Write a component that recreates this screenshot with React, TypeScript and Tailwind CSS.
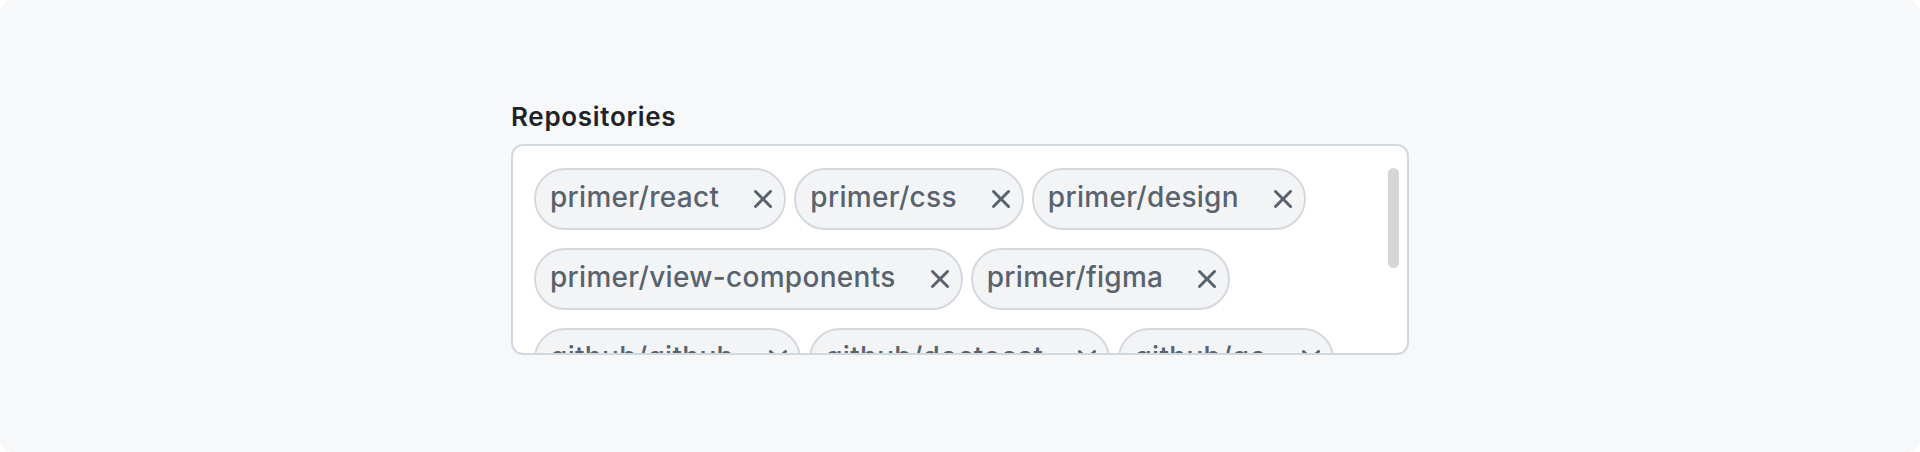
import React from "react";

const tokens = [
  "primer/react",
  "primer/css",
  "primer/design",
  "primer/view-components",
  "primer/figma",
  "github/github",
  "github/doctocat",
  "github/go",
  "github/docs",
  "github/primer",
];

function XIcon() {
  return (
    <svg width="32" height="32" viewBox="0 0 16 16" fill="currentColor" className="shrink-0">
      <path d="M3.72 3.72a.75.75 0 0 1 1.06 0L8 6.94l3.22-3.22a.749.749 0 0 1 1.275.326.749.749 0 0 1-.215.734L9.06 8l3.22 3.22a.749.749 0 0 1-.326 1.275.749.749 0 0 1-.734-.215L8 9.06l-3.22 3.22a.751.751 0 0 1-1.042-.018.751.751 0 0 1-.018-1.042L6.94 8 3.72 4.78a.75.75 0 0 1 0-1.06Z" />
    </svg>
  );
}

function Token({ label }: { label: string }) {
  return (
    <div className="inline-flex items-center h-[62px] rounded-full border-2 border-[#d5d9de] bg-[#f3f4f6] pl-[14px] pr-[5px] text-[28px] font-medium tracking-[0.3px] text-[#59636e] leading-none">
      <span className="pb-[5px]">{label}</span>
      <span className="ml-[28px] flex items-center">
        <XIcon />
      </span>
    </div>
  );
}

export default function App() {
  return (
    <div className="w-[1920px] h-[452px] bg-white" style={{ fontFamily: "Inter, 'Noto Sans', sans-serif" }}>
      <div className="w-full h-full rounded-[14px] bg-[#f6f8fa] flex justify-center pt-[101px]">
        <div className="w-[898px] flex flex-col">
          <div className="text-[26px] leading-[32px] font-semibold tracking-[0.7px] text-[#1f2328]">Repositories</div>
          <div className="relative mt-[11px] h-[211px] rounded-[12px] border-2 border-[#d1d9e0] bg-white overflow-hidden">
            <div className="flex flex-wrap gap-x-[8px] gap-y-[18px] pl-[21px] pt-[22px] pr-[60px]">
              {tokens.map((t) => (
                <Token key={t} label={t} />
              ))}
            </div>
            <div className="absolute right-[8px] top-[22px] w-[11px] h-[100px] rounded-full bg-[#d6d6d6]" />
          </div>
        </div>
      </div>
    </div>
  );
}
